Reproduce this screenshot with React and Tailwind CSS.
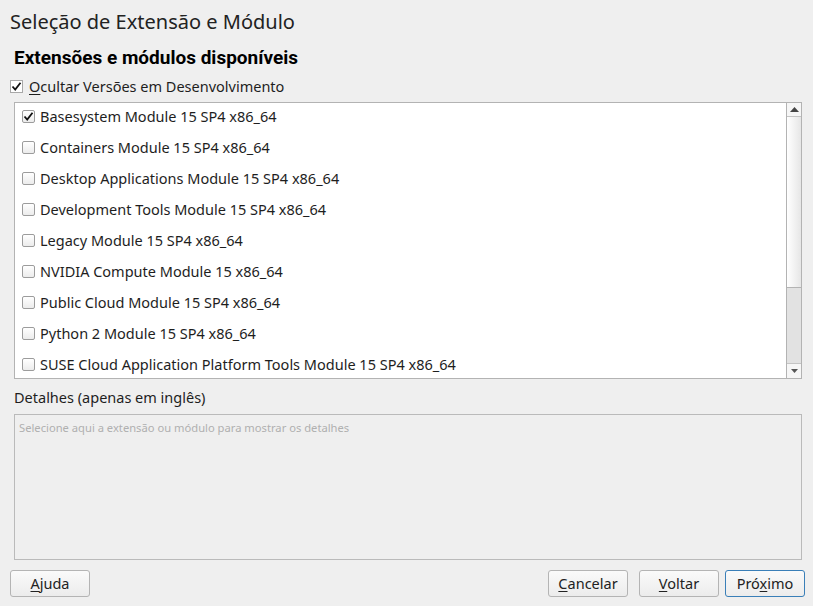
const modules = [
  { name: "Basesystem Module 15 SP4 x86_64", checked: true },
  { name: "Containers Module 15 SP4 x86_64" },
  { name: "Desktop Applications Module 15 SP4 x86_64" },
  { name: "Development Tools Module 15 SP4 x86_64" },
  { name: "Legacy Module 15 SP4 x86_64" },
  { name: "NVIDIA Compute Module 15 x86_64" },
  { name: "Public Cloud Module 15 SP4 x86_64" },
  { name: "Python 2 Module 15 SP4 x86_64" },
  { name: "SUSE Cloud Application Platform Tools Module 15 SP4 x86_64" },
];

const Tick = () => (
  <svg width="11" height="11" viewBox="0 0 11 11">
    <path
      d="M1.5 5.5 L4.2 8.5 L9.5 1.8"
      fill="none"
      stroke="#111"
      strokeWidth="1.8"
    />
  </svg>
);

const Btn = ({ children, primary, className = "" }) => (
  <button
    className={`h-[27px] w-[80px] rounded-[3px] border text-[14.5px] text-[#222] bg-gradient-to-b from-[#fafafa] to-[#ececec] ${
      primary ? "border-[#3a7fb8]" : "border-[#b4b4b4]"
    } ${className}`}
  >
    {children}
  </button>
);

export default function App() {
  return (
    <div
      className="w-[813px] h-[606px] bg-[#efefef] text-[#1e1e1e] flex flex-col overflow-hidden"
      style={{ fontFamily: "'Noto Sans', 'DejaVu Sans', sans-serif" }}
    >
      <h1 className="text-[20px] leading-[26px] pl-[10px] pt-[9px] text-[#222]">
        Seleção de Extensão e Módulo
      </h1>
      <h2
        className="text-[19px] font-bold leading-[24px] pl-[14px] mt-[11px] text-black"
        style={{ fontFamily: "Roboto, sans-serif" }}
      >
        Extensões e módulos disponíveis
      </h2>
      <label className="flex items-center gap-[6px] pl-[10px] mt-[7px] text-[14.5px] leading-[18px]">
        <span className="flex items-center justify-center w-[13px] h-[13px] border border-[#a8a8a8] bg-white">
          <Tick />
        </span>
        <span>
          <span className="underline underline-offset-2">O</span>cultar Versões
          em Desenvolvimento
        </span>
      </label>

      <div className="ml-[14px] mr-[11px] mt-[7px] h-[277px] border border-[#b3b3b3] bg-white flex overflow-hidden">
        <ul className="flex-1 pl-[7px] -mt-[2px]">
          {modules.map((m) => (
            <li
              key={m.name}
              className="flex items-center gap-[5px] h-[31px] text-[14.5px]"
            >
              <span className="flex items-center justify-center w-[13px] h-[13px] shrink-0 border border-[#9c9c9c] rounded-[2px] bg-gradient-to-b from-white to-[#ececec]">
                {m.checked && <Tick />}
              </span>
              <span>{m.name}</span>
            </li>
          ))}
        </ul>
        <div className="w-[15px] border-l border-[#b3b3b3] flex flex-col">
          <div className="h-[14px] border-b border-[#c4c4c4] flex items-center justify-center bg-[#f6f6f6]">
            <svg width="9" height="5" viewBox="0 0 9 5">
              <path d="M0 5 L4.5 0 L9 5Z" fill="#444" />
            </svg>
          </div>
          <div className="h-[171px] border-b border-[#b3b3b3] bg-gradient-to-r from-white to-[#e6e6e6]" />
          <div className="flex-1 bg-[#e2e2e2]" />
          <div className="h-[15px] border-t border-[#c4c4c4] flex items-center justify-center bg-[#f6f6f6]">
            <svg width="7" height="4" viewBox="0 0 7 4">
              <path d="M0 0 L3.5 4 L7 0Z" fill="#555" />
            </svg>
          </div>
        </div>
      </div>

      <div className="pl-[14px] mt-[8px] text-[14.5px] leading-[20px]">
        Detalhes (apenas em inglês)
      </div>
      <div className="ml-[14px] mr-[11px] mt-[7px] h-[146px] border border-[#bababa] bg-[#efefef] px-[4px] pt-[5px] text-[11.2px] text-[#b0b0b0]">
        Selecione aqui a extensão ou módulo para mostrar os detalhes
      </div>

      <div className="flex items-center pl-[10px] pr-[8px] mt-[10px]">
        <Btn>
          <span className="underline underline-offset-2">A</span>juda
        </Btn>
        <div className="flex-1" />
        <Btn>
          <span className="underline underline-offset-2">C</span>ancelar
        </Btn>
        <Btn className="ml-[11px]">
          <span className="underline underline-offset-2">V</span>oltar
        </Btn>
        <Btn primary className="ml-[6px]">
          Pró<span className="underline underline-offset-2">x</span>imo
        </Btn>
      </div>
    </div>
  );
}
